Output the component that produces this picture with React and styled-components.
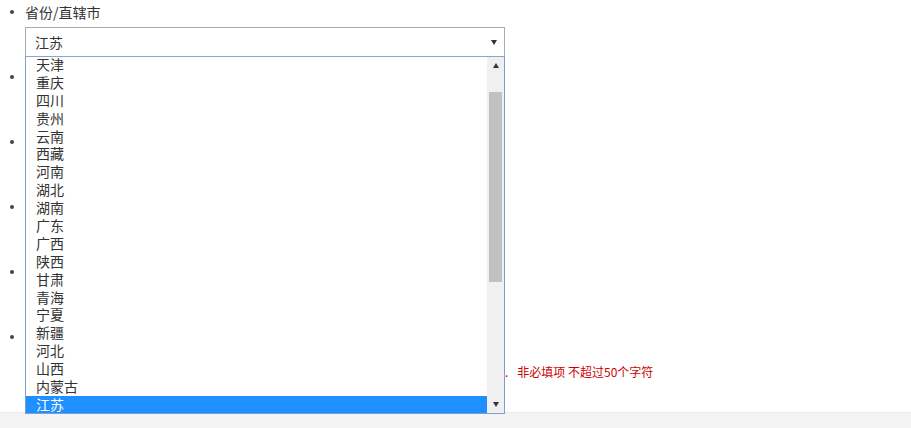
import React from "react";
import styled, { createGlobalStyle } from "styled-components";

const GlobalStyle = createGlobalStyle`
  html, body { margin: 0; padding: 0; background: #fff; }
  body { font-family: "Noto Sans CJK SC", "Noto Sans", sans-serif; color: #333; }
`;

const Page = styled.div`
  width: 911px;
  height: 428px;
  overflow: hidden;
  display: flex;
  flex-direction: column;
`;

const List = styled.ul`
  margin: 0;
  padding: 0 0 22px 0;
  list-style: none;
  display: flex;
  flex-direction: column;
`;

const Item = styled.li`
  height: 65px;
  display: grid;
  grid-template-columns: 25px 1fr;
  align-items: start;
`;

const BulletCell = styled.div`
  height: 24px;
  display: flex;
  align-items: center;
  padding-left: 10px;
`;

const Dot = styled.span`
  width: 4px;
  height: 4px;
  border-radius: 50%;
  background: #444;
`;

const Body = styled.div`
  display: flex;
  flex-direction: column;
`;

const Label = styled.div`
  font-size: 14px;
  line-height: 24px;
  height: 24px;
  color: #333;
  margin-bottom: 3px;
`;

const FieldRow = styled.div`
  display: flex;
  align-items: center;
  height: 30px;
  margin-top: ${(p) => p.$offset || 0}px;
`;

const SelectWrap = styled.div`
  position: relative;
  width: 480px;
`;

const SelectBox = styled.div`
  box-sizing: border-box;
  width: 480px;
  height: 30px;
  border: 1px solid #aaa;
  border-bottom-color: #8aa6cf;
  background: #fff;
  display: flex;
  align-items: center;
  justify-content: space-between;
  padding: 0 7px 0 9px;
  font-size: 14px;
  color: #333;
`;

const Caret = styled.span`
  width: 0;
  height: 0;
  border-left: 3px solid transparent;
  border-right: 3px solid transparent;
  border-top: ${(p) => (p.$up ? "0" : "5px solid #333")};
  border-bottom: ${(p) => (p.$up ? "5px solid #333" : "0")};
`;

const Dropdown = styled.div`
  position: absolute;
  top: 30px;
  left: 0;
  z-index: 10;
  box-sizing: border-box;
  width: 480px;
  height: 357px;
  border: 1px solid #7f9ed0;
  border-top: 0;
  background: #fff;
  display: flex;
  overflow: hidden;
`;

const Options = styled.div`
  flex: 1;
  overflow: hidden;
  display: flex;
  flex-direction: column;
  padding-top: 1px;
`;

const OptionsInner = styled.div`
  margin-top: -2px;
  display: flex;
  flex-direction: column;
`;

const Option = styled.div`
  height: 17.9px;
  line-height: 17.9px;
  flex-shrink: 0;
  padding-left: 10px;
  font-size: 14px;
  color: ${(p) => (p.$selected ? "#fff" : "#333")};
  background: ${(p) => (p.$selected ? "#1e90ff" : "transparent")};
`;

const Scrollbar = styled.div`
  width: 17px;
  background: #f0f0f0;
  display: flex;
  flex-direction: column;
`;

const ScrollBtn = styled.div`
  height: 17px;
  display: flex;
  align-items: center;
  justify-content: center;
  flex-shrink: 0;
`;

const Track = styled.div`
  flex: 1;
  display: flex;
  flex-direction: column;
  align-items: center;
`;

const Thumb = styled.div`
  margin-top: 18px;
  width: 13px;
  height: 190px;
  background: #c1c1c1;
`;

const Hint = styled.div`
  font-size: 12px;
  color: #d00000;
  white-space: nowrap;
  display: flex;
  align-items: center;
  gap: 9px;
`;

const Placeholder = styled.div`
  width: 480px;
  height: 30px;
  flex-shrink: 0;
`;

const Footer = styled.div`
  flex: 1;
  border-top: 1px solid #ebebeb;
  background: #f4f4f4;
`;

const provinces = [
  "天津", "重庆", "四川", "贵州", "云南", "西藏", "河南", "湖北", "湖南", "广东",
  "广西", "陕西", "甘肃", "青海", "宁夏", "新疆", "河北", "山西", "内蒙古", "江苏",
];

const hiddenRows = [1, 2, 3, 4, 5];

export default function App() {
  return (
    <>
      <GlobalStyle />
      <Page>
        <List>
          <Item>
            <BulletCell><Dot /></BulletCell>
            <Body>
              <Label>省份/直辖市</Label>
              <SelectWrap>
                <SelectBox>
                  <span>江苏</span>
                  <Caret />
                </SelectBox>
                <Dropdown>
                  <Options>
                    <OptionsInner>
                      {provinces.map((p) => (
                        <Option key={p} $selected={p === "江苏"}>{p}</Option>
                      ))}
                    </OptionsInner>
                  </Options>
                  <Scrollbar>
                    <ScrollBtn><Caret $up /></ScrollBtn>
                    <Track><Thumb /></Track>
                    <ScrollBtn><Caret /></ScrollBtn>
                  </Scrollbar>
                </Dropdown>
              </SelectWrap>
            </Body>
          </Item>
          {hiddenRows.map((n) => (
            <Item key={n}>
              <BulletCell><Dot /></BulletCell>
              <Body>
                {n === hiddenRows.length && (
                  <FieldRow $offset={31}>
                    <Placeholder />
                    <Hint>
                      <span>.</span>
                      <span>非必填项 不超过50个字符</span>
                    </Hint>
                  </FieldRow>
                )}
              </Body>
            </Item>
          ))}
        </List>
        <Footer />
      </Page>
    </>
  );
}
